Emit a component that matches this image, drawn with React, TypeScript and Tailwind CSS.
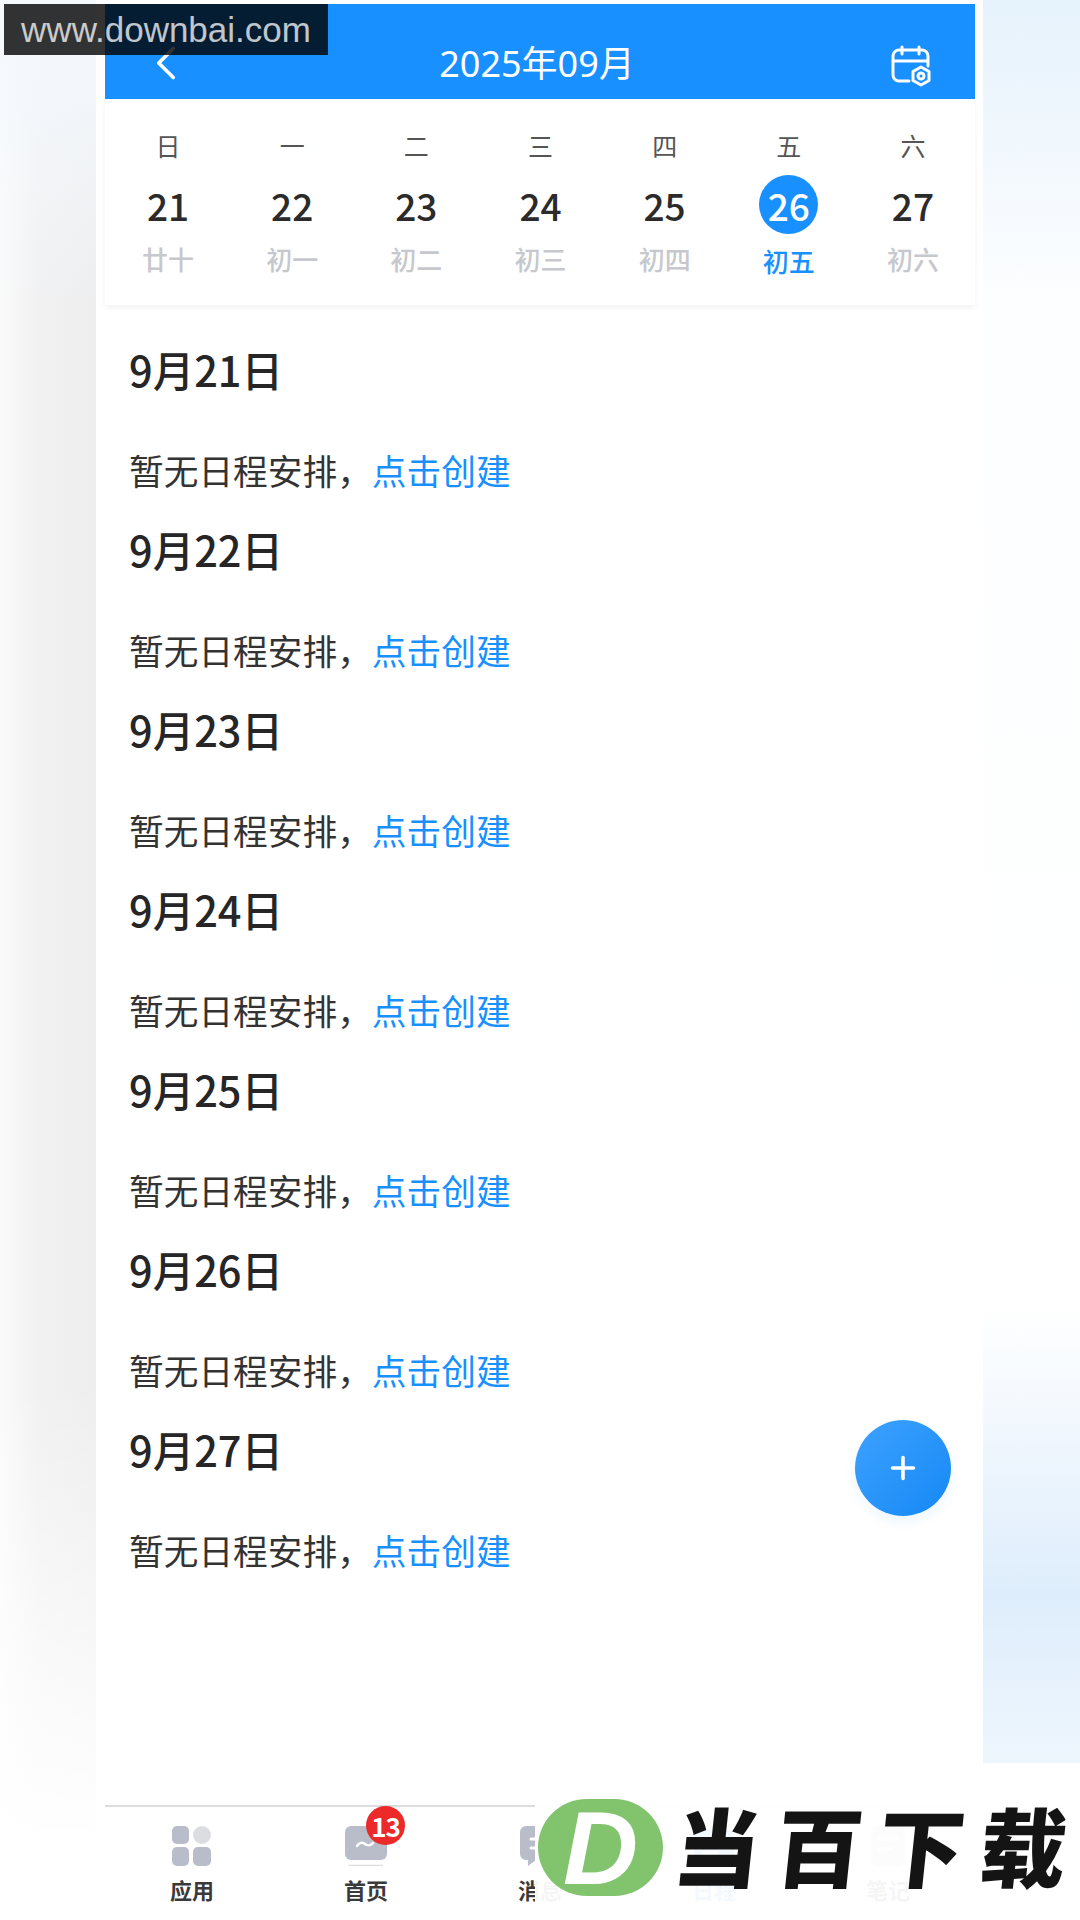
import { ChevronLeft, Plus } from 'lucide-react';

const weekDays = [
    { week: '日', date: '21', lunar: '廿十' },
    { week: '一', date: '22', lunar: '初一' },
    { week: '二', date: '23', lunar: '初二' },
    { week: '三', date: '24', lunar: '初三' },
    { week: '四', date: '25', lunar: '初四' },
    { week: '五', date: '26', lunar: '初五', active: true },
    { week: '六', date: '27', lunar: '初六' },
];

const cjk = 'font-["Noto_Sans_CJK_SC",sans-serif]';

function CalendarIcon() {
    return (
        <svg width="44" height="44" viewBox="0 0 44 44" fill="none" stroke="white" strokeWidth="3" strokeLinecap="round" strokeLinejoin="round">
            <path d="M20 37H10a6 6 0 0 1-6-6V12a6 6 0 0 1 6-6h23a6 6 0 0 1 6 6v10" />
            <path d="M5 17h33M13 3v7M30 3v7" />
            <path d="M32 23l8 4.500v9L32 41l-8-4.500v-9z" />
            <circle cx="32" cy="32" r="3" />
        </svg>
    );
}

function AppsIcon() {
    return (
        <svg width="40" height="40" viewBox="0 0 40 40">
            <rect x="0" y="0" width="17" height="18" rx="5" fill="#b9bdc9" />
            <circle cx="30" cy="9" r="9" fill="#dcdde0" />
            <rect x="0" y="21" width="17" height="19" rx="5" fill="#b9bdc9" />
            <rect x="21" y="21" width="18" height="19" rx="5" fill="#b9bdc9" />
        </svg>
    );
}

function HomeIcon() {
    return (
        <svg width="42" height="40" viewBox="0 0 42 40" fill="none">
            <rect x="0" y="0" width="42" height="34" rx="6" fill="#b9bdc9" />
            <path d="M12 20c3-4 5-4 8-2s5 2 8-1" stroke="white" strokeWidth="2.500" strokeLinecap="round" />
            <path d="M4 40h34" stroke="#dcdde0" strokeWidth="2.500" />
        </svg>
    );
}

function MessageIcon() {
    return (
        <svg width="40" height="40" viewBox="0 0 40 40" fill="none">
            <path d="M6 0h28a6 6 0 0 1 6 6v22a6 6 0 0 1-6 6H16l-8 6v-6H6a6 6 0 0 1-6-6V6a6 6 0 0 1 6-6z" fill="#b9bdc9" />
            <path d="M11 13h18M11 22h12" stroke="white" strokeWidth="3" strokeLinecap="round" />
        </svg>
    );
}

function ScheduleIcon() {
    return (
        <svg width="40" height="40" viewBox="0 0 40 40">
            <rect x="0" y="4" width="40" height="36" rx="6" fill="#1890ff" />
            <path d="M9 18h22M9 27h14" stroke="white" strokeWidth="3" strokeLinecap="round" />
        </svg>
    );
}

function NoteIcon() {
    return (
        <svg width="40" height="40" viewBox="0 0 40 40">
            <rect x="3" y="0" width="34" height="40" rx="6" fill="#b9bdc9" />
            <path d="M11 13h18M11 23h12" stroke="white" strokeWidth="3" strokeLinecap="round" />
        </svg>
    );
}

const tabs = [
    { label: '应用', icon: <AppsIcon /> },
    { label: '首页', icon: <HomeIcon />, badge: '13' },
    { label: '消息', icon: <MessageIcon /> },
    { label: '日程', icon: <ScheduleIcon />, color: 'text-[#1890ff]' },
    { label: '笔记', icon: <NoteIcon /> },
];

export default function App() {
    return (
        <div className={`relative w-[1080px] h-[1920px] flex overflow-hidden bg-white ${cjk}`}>
            {/* fundo esquerdo */}
            <div className="w-[96px] shrink-0 bg-[linear-gradient(180deg,#f4f9fe_0%,rgba(255,255,255,0)_16%,rgba(255,255,255,0)_72%,#ffffff_96%),linear-gradient(90deg,#fbfbfb,#f1f1f2_40%,#eeeeef)]" />

            <div className="relative w-[887px] shrink-0 bg-white pt-[4px] pl-[9px] pr-[8px] flex flex-col">
                <header className="h-[95px] shrink-0 bg-[#1890ff] text-white flex items-center justify-between pt-[28px] pl-[32px] pr-[42px]">
                    <ChevronLeft size={58} strokeWidth={1.5} className="mb-[6px]" />
                    <span className="text-[36px] leading-none font-['Noto_Sans',sans-serif] mb-[6px] -ml-[10px]">
                        2025<span className={cjk}>年</span>09<span className={cjk}>月</span>
                    </span>
                    <CalendarIcon />
                </header>

                <div className="h-[206px] shrink-0 grid grid-cols-7 pl-[1px] pt-[26px] shadow-[0_3px_6px_rgba(0,0,0,0.05)]">
                    {weekDays.map((d) => (
                        <div key={d.date} className="flex flex-col items-center">
                            <span className="text-[25px] leading-[40px] text-[#555555]">{d.week}</span>
                            <span
                                className={`mt-[10px] w-[59px] h-[59px] pt-[2px] rounded-full flex items-center justify-center text-[37px] font-medium leading-none ${
                                    d.active ? 'bg-[#1890ff] text-white' : 'text-[#2b2b2b]'
                                }`}
                            >
                                {d.date}
                            </span>
                            <span
                                className={`mt-[7px] text-[26px] leading-[36px] font-medium ${
                                    d.active ? 'text-[#1890ff] pt-[2px]' : 'text-[#c6c8cd]'
                                }`}
                            >
                                {d.lunar}
                            </span>
                        </div>
                    ))}
                </div>

                <main className="flex-1 pl-[25px] pt-[34px]">
                    {weekDays.map((d) => (
                        <section key={d.date} className="h-[180px]">
                            <h2 className="h-[60px] text-[41.500px] leading-[60px] font-medium text-[#262626] -ml-[1px]">
                                9月{d.date}日
                            </h2>
                            <p className="mt-[46px] text-[34.700px] leading-[50px] text-[#333333] -ml-[1px]">
                                暂无日程安排，<span className="text-[#1890ff]">点击创建</span>
                            </p>
                        </section>
                    ))}
                </main>

                <nav className="h-[115px] shrink-0 border-t-[2px] border-[#dcdde0] grid grid-cols-5 pt-[19px]">
                    {tabs.map((t) => (
                        <div key={t.label} className="relative flex flex-col items-center">
                            <div className="h-[40px] flex items-center justify-center">{t.icon}</div>
                            <span className={`mt-[7px] text-[22px] leading-[32px] font-bold ${t.color ?? 'text-[#3a3a3a]'}`}>
                                {t.label}
                            </span>
                            {t.badge && (
                                <span className="absolute top-[-20px] left-[87px] w-[39px] h-[39px] rounded-full bg-[#ec2a2a] text-white text-[26px] font-bold tracking-[-1px] flex items-center justify-center leading-none">
                                    {t.badge}
                                </span>
                            )}
                        </div>
                    ))}
                </nav>

                <button className="absolute left-[759px] top-[1420px] w-[96px] h-[96px] rounded-full bg-[linear-gradient(135deg,#3ea2ff,#1588f5)] text-white flex items-center justify-center shadow-[0_6px_12px_rgba(24,144,255,0.08)]">
                    <Plus size={36} strokeWidth={2.4} />
                </button>
            </div>

            {/* fundo direito */}
            <div className="flex-1 bg-[linear-gradient(180deg,#e6f2fc_0%,#fdfeff_16%,#ffffff_68%,#deedfc_83%,#eef6fd_91.800%,#ffffff_91.800%)]" />

            {/* marca d'agua superior */}
            <div className="absolute left-[4px] top-[4px] w-[324px] h-[51px] bg-black/80 flex items-center justify-center">
                <span className="text-[35px] leading-none text-white/75 font-['Liberation_Sans',sans-serif]">www.downbai.com</span>
            </div>

            {/* marca d'agua inferior */}
            <div className="absolute left-[535px] top-[1764px] right-0 bottom-0 bg-white/95">
                <div className="absolute left-[3px] top-[35px] w-[125px] h-[97px] rounded-full bg-[#82c46e] flex items-center justify-center">
                    <span className="text-[104px] leading-none font-bold italic text-white font-['Liberation_Sans',sans-serif]">D</span>
                </div>
                <span className="absolute left-[140px] top-[30px] text-[86px] leading-[100px] font-black tracking-[16px] text-[#141414] whitespace-nowrap -skew-x-6">
                    当百下<span className="tracking-normal">载</span>
                </span>
            </div>
        </div>
    );
}
